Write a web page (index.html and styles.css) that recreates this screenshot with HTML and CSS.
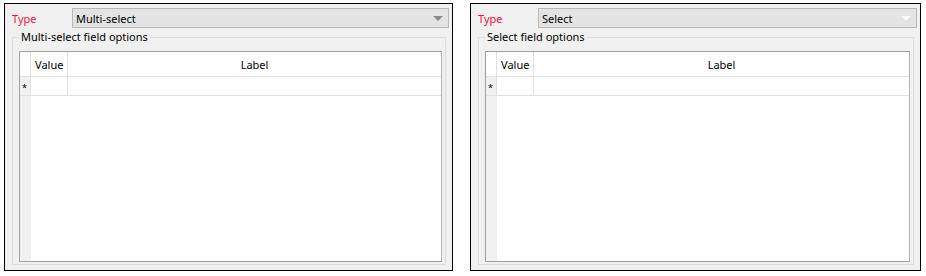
FILE: index.html
```html
<!DOCTYPE html>
<html lang="en">
<head>
  <meta charset="UTF-8" />
  <title>Field options</title>
  <link rel="stylesheet" href="styles.css">
</head>
<body>

<div class="panels">
  <div class="panel">
    <div class="type-row">
      <span class="type-label">Type</span>
      <div class="combo">
        <span>Multi-select</span>
        <span class="arrow"></span>
      </div>
    </div>
    <fieldset class="group">
      <legend>Multi-select field options</legend>
      <div class="grid">
        <div class="grid-head">
          <div class="rh"></div>
          <div class="col-value">Value</div>
          <div class="col-label">Label</div>
        </div>
        <div class="grid-row">
          <div class="rh">*</div>
          <div class="col-value"></div>
          <div class="col-label"></div>
        </div>
        <div class="grid-body">
          <div class="rh"></div>
        </div>
      </div>
    </fieldset>
  </div>

  <div class="panel panel-right">
    <div class="type-row">
      <span class="type-label">Type</span>
      <div class="combo">
        <span>Select</span>
        <span class="arrow arrow-light"></span>
      </div>
    </div>
    <fieldset class="group">
      <legend>Select field options</legend>
      <div class="grid">
        <div class="grid-head">
          <div class="rh"></div>
          <div class="col-value">Value</div>
          <div class="col-label">Label</div>
        </div>
        <div class="grid-row">
          <div class="rh">*</div>
          <div class="col-value"></div>
          <div class="col-label"></div>
        </div>
        <div class="grid-body">
          <div class="rh"></div>
        </div>
      </div>
    </fieldset>
  </div>
</div>

</body>
</html>
```

FILE: styles.css
```css
* { box-sizing: border-box; }
body {
  margin: 0;
  background: #fff;
  font-family: "Noto Sans", "DejaVu Sans", sans-serif;
  font-size: 11px;
  color: #000;
}
.panels {
  display: flex;
  gap: 17px;
  padding: 3px 0 0 4px;
}
.panel {
  width: 449px;
  height: 268px;
  border: 1px solid #000;
  background: #f0f0f0;
  padding: 4px 3px 0 6px;
  display: flex;
  flex-direction: column;
}
.panel-right { width: 451px; }
.type-row {
  display: flex;
  align-items: center;
  height: 20px;
}
.type-label {
  color: #f0143c;
  width: 61px;
  padding-left: 1px;
}
.combo {
  flex: 1;
  height: 20px;
  border: 1px solid #b9b9b9;
  background: #e3e3e3;
  display: flex;
  align-items: center;
  justify-content: space-between;
  padding: 0 5px 0 3px;
}
.arrow {
  width: 0;
  height: 0;
  border-left: 5px solid transparent;
  border-right: 5px solid transparent;
  border-top: 5px solid #8a8a8a;
}
.arrow-light { border-top-color: #fafafa; }
.group {
  margin: 2px 3px 5px 1px;
  padding: 7px 3px 2px 6px;
  border: 1px solid #dcdcdc;
  flex: 1;
  display: flex;
  min-height: 0;
}
.group legend {
  padding: 0 2px;
  margin-left: 0;
  line-height: 14px;
}
.grid {
  flex: 1;
  background: #fff;
  border: 1px solid #a0a0a0;
  border-right-color: #b4b4b4;
  display: flex;
  flex-direction: column;
}
.grid-head, .grid-row {
  display: flex;
  border-bottom: 1px solid #e2e2e2;
}
.grid-head { height: 25px; }
.grid-row { height: 19px; }
.grid-head > div, .grid-row > div {
  display: flex;
  align-items: center;
}
.rh {
  width: 11px;
  background: #f0f0f0;
  border-right: 1px solid #e2e2e2;
  font-size: 9px;
  padding-left: 2px;
  align-items: flex-start !important;
  padding-top: 4px;
}
.grid-head .rh { background: #fff; }
.col-value {
  width: 37px;
  border-right: 1px solid #e2e2e2;
  padding-left: 4px;
}
.col-label {
  flex: 1;
  justify-content: center;
}
.grid-body {
  flex: 1;
  display: flex;
}
.grid-body .rh { border-right: none; }
```
